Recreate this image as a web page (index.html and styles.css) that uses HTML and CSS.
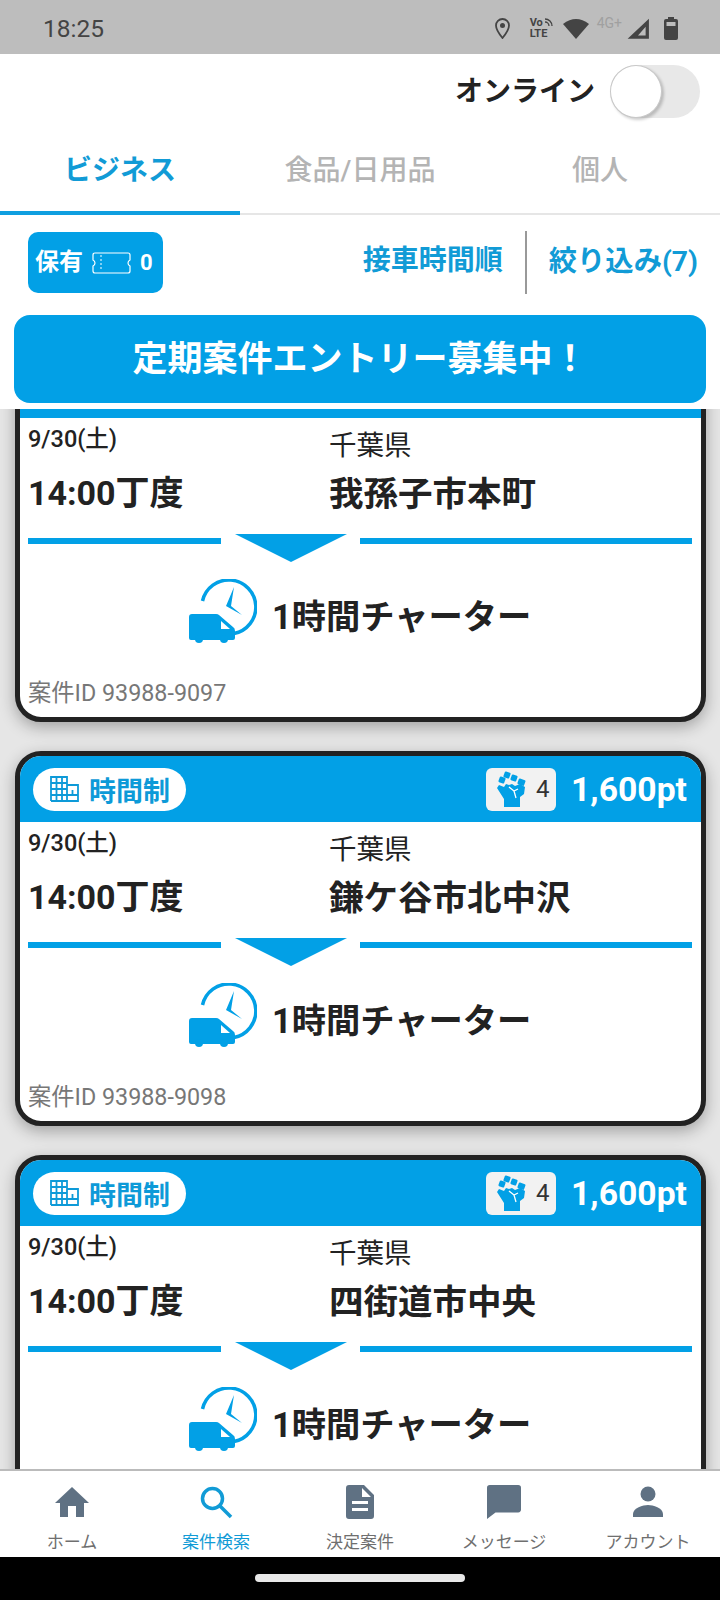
FILE: index.html
```html
<!DOCTYPE html>
<html lang="ja">

<head>
  <meta charset="UTF-8">
  <meta name="viewport" content="width=device-width, initial-scale=1.0">
  <title>案件検索</title>
  <link rel="stylesheet" href="styles.css">
</head>

<body>
  <svg class="defs" width="0" height="0">
    <symbol id="building" viewBox="0 0 29 26">
      <path d="M1 25V1h16v24M17 9h11v16H1M6.500 1v24M12 1v24M1 7h16M1 13h16M1 19h27M22.500 14v5" fill="none" stroke="currentColor" stroke-width="1.800" />
    </symbol>
    <symbol id="fist" viewBox="0 0 30 36">
      <path d="M8 36V28L1 17 3 14l5 2 2-3 3 1 3-1 3 2 5-2 5 3-1 7-4 3v13z" fill="currentColor" />
      <rect x="8" y="1" width="6" height="6" rx="1" transform="rotate(20 11 4)" fill="currentColor" />
      <rect x="15" y="4" width="6" height="6" rx="1" transform="rotate(20 18 7)" fill="currentColor" />
      <rect x="22" y="8" width="7" height="6" rx="1" transform="rotate(20 25 11)" fill="currentColor" />
      <rect x="3" y="6" width="6" height="6" rx="1" transform="rotate(20 6 9)" fill="currentColor" />
      <path d="M13 16l5 4 4-2M18 20l2 7" fill="none" stroke="#fff" stroke-width="1.300" />
    </symbol>
    <symbol id="charter" viewBox="0 0 68 64">
      <path d="M13.500 22A27 27 0 1 1 45 54.500" fill="none" stroke="currentColor" stroke-width="3.500" />
      <path d="M45 8 37 27 53 36 42 27z" fill="currentColor" />
      <path d="M0 38q0-3 3-3h24q2 0 3 1l14 12q2 1 2 4v7q0 2-2 2H2q-2 0-2-2z" fill="currentColor" />
      <path d="M32 42v8h9z" fill="#fff" />
      <circle cx="10" cy="60" r="4" fill="currentColor" />
      <circle cx="35" cy="60" r="4" fill="currentColor" />
    </symbol>
  </svg>

  <header class="top">
    <div class="status">
      <span class="clock">18:25</span>
      <div class="status-icons">
        <svg class="ic-pin" viewBox="0 0 15 21">
          <path d="M7.500 1a6.500 6.500 0 0 0-6.500 6.500C1 12 7.500 20 7.500 20S14 12 14 7.500A6.500 6.500 0 0 0 7.500 1z" fill="none" stroke="#444" stroke-width="1.800" />
          <circle cx="7.500" cy="7.500" r="2.500" fill="#444" />
        </svg>
        <div class="volte">
          <span>Vo<svg class="ic-waves" viewBox="0 0 9 9"><path d="M1 1a7 7 0 0 1 7 7M1 4a4 4 0 0 1 4 4" fill="none" stroke="#444" stroke-width="1.300" /></svg></span>
          <span>LTE</span>
        </div>
        <svg class="ic-wifi" viewBox="0 0 26 21">
          <path d="M0 6Q13-4 26 6L13 21z" fill="#444" />
        </svg>
        <span class="net">4G+</span>
        <svg class="ic-signal" viewBox="0 0 22 21">
          <path d="M21 1.500V20H1.500zM18 9l-7 8h7z" fill="#444" fill-rule="evenodd" />
        </svg>
        <svg class="ic-battery" viewBox="0 0 14 23">
          <path d="M4 0h6v2h2q2 0 2 2v17q0 2-2 2H2q-2 0-2-2V4q0-2 2-2h2zM2.500 5v4h9V5z" fill="#444" fill-rule="evenodd" />
        </svg>
      </div>
    </div>

    <div class="online">
      <span class="online-label">オンライン</span>
      <div class="toggle"><div class="knob"></div></div>
    </div>

    <nav class="tabs">
      <div class="tab active">ビジネス</div>
      <div class="tab">食品/日用品</div>
      <div class="tab">個人</div>
    </nav>

    <div class="toolbar">
      <div class="holding">
        <span>保有</span>
        <svg class="ic-ticket" viewBox="0 0 39 22">
          <path d="M3 1h33q2 0 2 2v5q-2 1-2 3t2 3v5q0 2-2 2H3q-2 0-2-2v-5q2-1 2-3T1 8V3q0-2 2-2z" fill="none" stroke="#fff" stroke-width="1.200" />
          <path d="M9 3v16" fill="none" stroke="#fff" stroke-width="1" stroke-dasharray="2 2" />
        </svg>
        <span class="holding-count">0</span>
      </div>
      <div class="sort">接車時間順</div>
      <div class="filter">絞り込み(7)</div>
    </div>

    <div class="banner">定期案件エントリー募集中！</div>
  </header>

  <main class="list">
    <div class="cards">
      <article class="card">
        <div class="card-head"></div>
        <div class="route">
          <div>
            <div class="date">9/30(土)</div>
            <div class="time">14:00丁度</div>
          </div>
          <div>
            <div class="pref">千葉県</div>
            <div class="city">我孫子市本町</div>
          </div>
        </div>
        <div class="divider"><div class="line-l"></div><div class="tri"></div><div class="line-r"></div></div>
        <div class="service"><svg class="ic-charter"><use href="#charter" /></svg>1時間チャーター</div>
        <div class="case-id">案件ID 93988-9097</div>
      </article>

      <article class="card">
        <div class="card-head">
          <div class="kind"><svg class="ic-building"><use href="#building" /></svg>時間制</div>
          <div class="power"><svg class="ic-fist"><use href="#fist" /></svg>4</div>
          <div class="points">1,600pt</div>
        </div>
        <div class="route">
          <div>
            <div class="date">9/30(土)</div>
            <div class="time">14:00丁度</div>
          </div>
          <div>
            <div class="pref">千葉県</div>
            <div class="city">鎌ケ谷市北中沢</div>
          </div>
        </div>
        <div class="divider"><div class="line-l"></div><div class="tri"></div><div class="line-r"></div></div>
        <div class="service"><svg class="ic-charter"><use href="#charter" /></svg>1時間チャーター</div>
        <div class="case-id">案件ID 93988-9098</div>
      </article>

      <article class="card">
        <div class="card-head">
          <div class="kind"><svg class="ic-building"><use href="#building" /></svg>時間制</div>
          <div class="power"><svg class="ic-fist"><use href="#fist" /></svg>4</div>
          <div class="points">1,600pt</div>
        </div>
        <div class="route">
          <div>
            <div class="date">9/30(土)</div>
            <div class="time">14:00丁度</div>
          </div>
          <div>
            <div class="pref">千葉県</div>
            <div class="city">四街道市中央</div>
          </div>
        </div>
        <div class="divider"><div class="line-l"></div><div class="tri"></div><div class="line-r"></div></div>
        <div class="service"><svg class="ic-charter"><use href="#charter" /></svg>1時間チャーター</div>
      </article>
    </div>
  </main>

  <nav class="bottom">
    <div class="bottom-item">
      <svg class="bottom-icon" viewBox="0 0 34 34"><path d="M17 2 0 18h5v14h8V21h8v11h8V18h5z" fill="currentColor" /></svg>
      <span>ホーム</span>
    </div>
    <div class="bottom-item current">
      <svg class="bottom-icon" viewBox="0 0 34 34"><circle cx="13.500" cy="13.500" r="10" fill="none" stroke="currentColor" stroke-width="3.500" /><path d="M21 21 32 32" fill="none" stroke="currentColor" stroke-width="3.500" /></svg>
      <span>案件検索</span>
    </div>
    <div class="bottom-item">
      <svg class="bottom-icon" viewBox="0 0 34 34"><path d="M6 0h15l10 10v21q0 3-3 3H6q-3 0-3-3V3q0-3 3-3zM19 3v9h9zM9 16v3h16v-3zM9 23v3h16v-3z" fill="currentColor" fill-rule="evenodd" /></svg>
      <span>決定案件</span>
    </div>
    <div class="bottom-item">
      <svg class="bottom-icon" viewBox="0 0 36 36"><path d="M3 0h30q3 0 3 3v23q0 3-3 3H9l-9 7V3q0-3 3-3z" fill="currentColor" /></svg>
      <span>メッセージ</span>
    </div>
    <div class="bottom-item">
      <svg class="bottom-icon" viewBox="0 0 34 34"><circle cx="17" cy="9" r="7.500" fill="currentColor" /><path d="M2 32v-3c0-6 10-9 15-9s15 3 15 9v3z" fill="currentColor" /></svg>
      <span>アカウント</span>
    </div>
  </nav>

  <div class="gesture"><div class="gesture-bar"></div></div>
</body>

</html>
```

FILE: styles.css
```css
* {
  box-sizing: border-box;
}

body {
  margin: 0;
  width: 720px;
  height: 1600px;
  display: flex;
  flex-direction: column;
  overflow: hidden;
  font-family: Roboto, 'Noto Sans CJK JP', sans-serif;
  color: #222;
  background: #fff;
}

.defs {
  position: absolute;
}

svg {
  display: block;
  flex-shrink: 0;
}

/* status bar */
.top {
  background: white;
  position: relative;
  z-index: 2;
  height: 409px;
  flex-shrink: 0;
}

.status {
  height: 54px;
  background: #bdbdbd;
  display: flex;
  align-items: center;
  justify-content: space-between;
  padding: 2px 42px 0 43px;
}

.clock {
  font-size: 24.500px;
  color: #444;
}

.status-icons {
  display: flex;
  align-items: center;
}

.ic-pin {
  width: 15px;
  height: 21px;
}

.volte {
  margin-left: 20px;
  width: 26px;
  font-size: 11px;
  line-height: 11px;
  font-weight: 700;
  color: #444;
}

.volte span {
  display: flex;
  align-items: center;
}

.ic-waves {
  width: 9px;
  height: 9px;
  margin-left: 1px;
}

.ic-wifi {
  margin-left: 7px;
  width: 26px;
  height: 21px;
}

.net {
  margin: -10px 0 0 8px;
  font-size: 14px;
  line-height: 14px;
  color: #a0a0a0;
}

.ic-signal {
  margin-left: 4px;
  width: 24px;
  height: 23px;
}

.ic-battery {
  margin-left: 14px;
  width: 14px;
  height: 23px;
}

/* online switch */
.online {
  height: 70px;
  display: flex;
  align-items: flex-start;
  justify-content: flex-end;
  padding: 11px 20px 0 0;
}

.online-label {
  font-size: 28px;
  line-height: 53px;
  font-weight: 700;
  margin-right: 15px;
}

.toggle {
  width: 90px;
  height: 53px;
  border-radius: 27px;
  background: #e8e8e8;
}

.knob {
  width: 52px;
  height: 53px;
  border-radius: 50%;
  background: white;
  border: 1px solid #c8c8c8;
  box-shadow: 2px 2px 3px rgba(0, 0, 0, 0.2);
}

/* tabs */
.tabs {
  display: flex;
  height: 91px;
  border-bottom: 2px solid #e6e6e6;
}

.tab {
  width: 240px;
  height: 91px;
  font-size: 28px;
  line-height: 93px;
  font-weight: 500;
  text-align: center;
  color: #b4b4b4;
}

.tab.active {
  color: #119bd6;
  font-weight: 700;
  border-bottom: 4px solid #0f9fe0;
}

/* toolbar */
.toolbar {
  height: 100px;
  padding: 17px 22px 0 28px;
  display: flex;
  align-items: flex-start;
}

.holding {
  width: 135px;
  height: 61px;
  background: #02a0e6;
  border-radius: 10px;
  color: white;
  font-size: 24px;
  line-height: 55px;
  font-weight: 700;
  display: flex;
  align-items: center;
  padding-left: 7px;
}

.ic-ticket {
  width: 39px;
  height: 22px;
  margin: 0 9px 0 9px;
}

.holding-count {
  font-size: 22px;
}

.sort,
.filter {
  font-size: 28px;
  line-height: 59px;
  font-weight: 700;
  color: #119bd6;
}

.sort {
  margin-left: auto;
  padding-right: 22px;
  height: 63px;
  border-right: 2px solid #999;
  margin-top: -1px;
}

.filter {
  padding-left: 22px;
  font-size: 28.300px;
}

.banner {
  margin: 0 14px;
  height: 88px;
  border-radius: 16px;
  background: #02a0e6;
  color: white;
  font-size: 35px;
  font-weight: 700;
  line-height: 90px;
  text-align: center;
}

/* case list */
.list {
  flex: 1;
  min-height: 0;
  overflow: hidden;
  background: #e6e6e6;
}

.cards {
  margin-top: -62px;
  padding: 0 14px 0 15px;
  display: flex;
  flex-direction: column;
  gap: 29px;
}

.card {
  height: 375px;
  flex-shrink: 0;
  border: 5px solid #222;
  border-radius: 26px;
  background: white;
  overflow: hidden;
  box-shadow: 0 5px 16px rgba(0, 0, 0, 0.3);
}

.card-head {
  height: 66px;
  background: #02a0e6;
  display: flex;
  align-items: center;
  padding: 0 14px 0 13px;
}

.kind {
  height: 43px;
  width: 153px;
  border-radius: 22px;
  background: white;
  color: #0d9ad8;
  font-size: 27px;
  font-weight: 700;
  display: flex;
  align-items: center;
  padding-left: 17px;
}

.ic-building {
  width: 29px;
  height: 26px;
  margin-right: 10px;
}

.power {
  margin-left: auto;
  width: 70px;
  height: 43px;
  border-radius: 6px;
  background: #f2f2f2;
  display: flex;
  align-items: center;
  padding-left: 10px;
  font-size: 24px;
  color: #333;
}

.ic-fist {
  width: 30px;
  height: 36px;
  margin-right: 10px;
  color: #02a0e6;
}

.points {
  margin-left: 15px;
  color: white;
  font-size: 33.700px;
  font-weight: 700;
}

.route {
  display: grid;
  grid-template-columns: 301px 1fr;
  padding-left: 8px;
  height: 116px;
}

.date {
  font-size: 23.500px;
  line-height: 42px;
  font-weight: 500;
}

.time {
  margin-top: 6px;
  font-size: 34px;
  line-height: 54px;
  font-weight: 700;
}

.pref {
  font-size: 27.500px;
  line-height: 56px;
}

.city {
  font-size: 34.500px;
  line-height: 40px;
  font-weight: 700;
}

.divider {
  display: flex;
  align-items: flex-start;
  padding: 0 9px 0 8px;
  height: 28px;
}

.line-l,
.line-r {
  height: 6px;
  margin-top: 4px;
  background: #02a0e6;
}

.line-l {
  width: 193px;
}

.line-r {
  flex: 1;
}

.tri {
  width: 112px;
  height: 28px;
  margin: 0 13px 0 14px;
  background: #02a0e6;
  clip-path: polygon(0 0, 100% 0, 50% 100%);
}

.service {
  margin-top: 18px;
  padding-top: 4px;
  height: 64px;
  display: flex;
  align-items: center;
  padding-left: 169px;
  font-size: 34.300px;
  font-weight: 700;
}

.ic-charter {
  align-self: flex-start;
  width: 68px;
  height: 64px;
  margin: -5px 15px 0 0;
  color: #02a0e6;
}

.case-id {
  margin-top: 31px;
  padding-left: 8px;
  font-size: 23.300px;
  line-height: 36px;
  color: #777;
}

/* bottom nav */
.bottom {
  height: 88px;
  flex-shrink: 0;
  background: white;
  border-top: 2px solid #bbb;
  position: relative;
  z-index: 2;
  display: grid;
  grid-template-columns: repeat(5, 144px);
}

.bottom-item {
  display: flex;
  flex-direction: column;
  align-items: center;
  padding-top: 14px;
  font-size: 17px;
  color: #6f6f6f;
}

.bottom-item span {
  margin-top: 11px;
  line-height: 24px;
}

.bottom-icon {
  width: 34px;
  height: 34px;
  color: #5f7183;
}

.bottom-item.current,
.bottom-item.current .bottom-icon {
  color: #119bd6;
}

.gesture {
  height: 43px;
  flex-shrink: 0;
  background: black;
  display: flex;
  justify-content: center;
  padding-top: 17px;
}

.gesture-bar {
  width: 210px;
  height: 8px;
  border-radius: 4px;
  background: #e8e8e8;
}
```
